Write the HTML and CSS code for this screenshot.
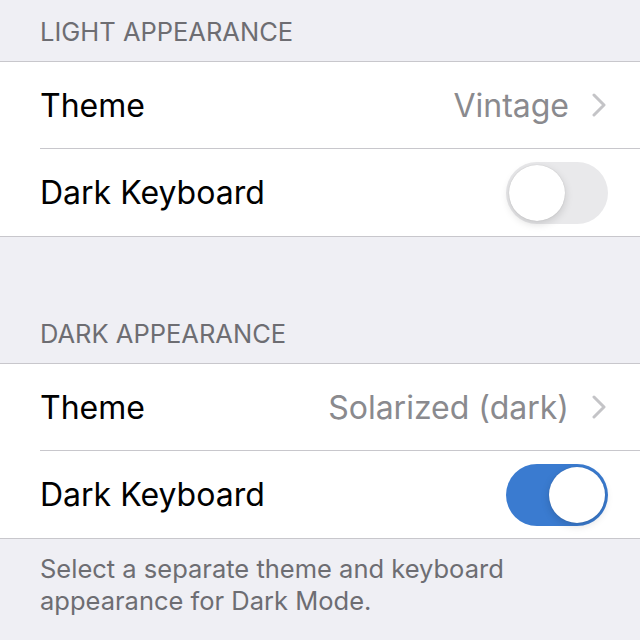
FILE: index.html
```html
<!DOCTYPE html>
<html lang="en">
<head>
    <meta charset="UTF-8">
    <meta name="viewport" content="width=device-width, initial-scale=1.0">
    <title>Appearance</title>
    <link rel="stylesheet" href="styles.css">
</head>
<body>
    <div class="settings">
        <div class="section-header">Light Appearance</div>
        <div class="group">
            <div class="row">
                <div class="row-inner">
                    <span class="label">Theme</span>
                    <span class="value">Vintage</span>
                    <svg class="chevron" viewBox="0 0 14 24" width="14" height="24">
                        <path d="M2 2 L12 12 L2 22" fill="none" stroke="#c4c4c7" stroke-width="3" stroke-linecap="round" stroke-linejoin="round"/>
                    </svg>
                </div>
            </div>
            <div class="row">
                <div class="row-inner">
                    <span class="label">Dark Keyboard</span>
                    <div class="toggle"><div class="knob"></div></div>
                </div>
            </div>
        </div>

        <div class="section-header spaced">Dark Appearance</div>
        <div class="group">
            <div class="row">
                <div class="row-inner">
                    <span class="label">Theme</span>
                    <span class="value">Solarized (dark)</span>
                    <svg class="chevron" viewBox="0 0 14 24" width="14" height="24">
                        <path d="M2 2 L12 12 L2 22" fill="none" stroke="#c4c4c7" stroke-width="3" stroke-linecap="round" stroke-linejoin="round"/>
                    </svg>
                </div>
            </div>
            <div class="row">
                <div class="row-inner">
                    <span class="label">Dark Keyboard</span>
                    <div class="toggle on"><div class="knob"></div></div>
                </div>
            </div>
        </div>
        <div class="section-footer">Select a separate theme and keyboard appearance for Dark Mode.</div>
    </div>
</body>
</html>
```

FILE: styles.css
```css
body {
    margin: 0;
    background-color: #efeff4;
    font-family: Inter, "Noto Sans", sans-serif;
}

.settings {
    width: 640px;
}

.section-header {
    height: 61px;
    box-sizing: border-box;
    padding: 0 40px 15px;
    display: flex;
    align-items: flex-end;
    font-size: 25.5px;
    line-height: 28px;
    color: #6d6d72;
    text-transform: uppercase;
}

.section-header.spaced {
    margin-top: 65px;
}

.group {
    background-color: white;
    border-top: 1px solid #c8c7cc;
    border-bottom: 1px solid #c8c7cc;
}

.row {
    padding-left: 40px;
}

.row-inner {
    height: 87px;
    box-sizing: border-box;
    display: flex;
    align-items: center;
    padding-right: 32px;
    border-bottom: 1px solid #c8c7cc;
}

.row:last-child .row-inner {
    border-bottom: none;
}

.label {
    flex: 1;
    font-size: 32px;
    color: black;
}

.value {
    font-size: 32px;
    color: #8a8a8e;
    margin-right: 23px;
}

.chevron {
    display: block;
    margin-right: 2px;
}

.toggle {
    width: 102px;
    height: 62px;
    border-radius: 31px;
    background-color: #e9e9eb;
    position: relative;
}

.toggle.on {
    background-color: #3a7bd0;
}

.knob {
    position: absolute;
    top: 3px;
    left: 3px;
    width: 56px;
    height: 56px;
    border-radius: 50%;
    background-color: white;
    box-shadow: 0 3px 8px rgba(0,0,0,0.15), 0 0 1px rgba(0,0,0,0.2);
}

.toggle.on .knob {
    left: 43px;
}

.section-footer {
    padding: 14px 40px 0;
    font-size: 25.5px;
    line-height: 32px;
    color: #6d6d72;
}
```
